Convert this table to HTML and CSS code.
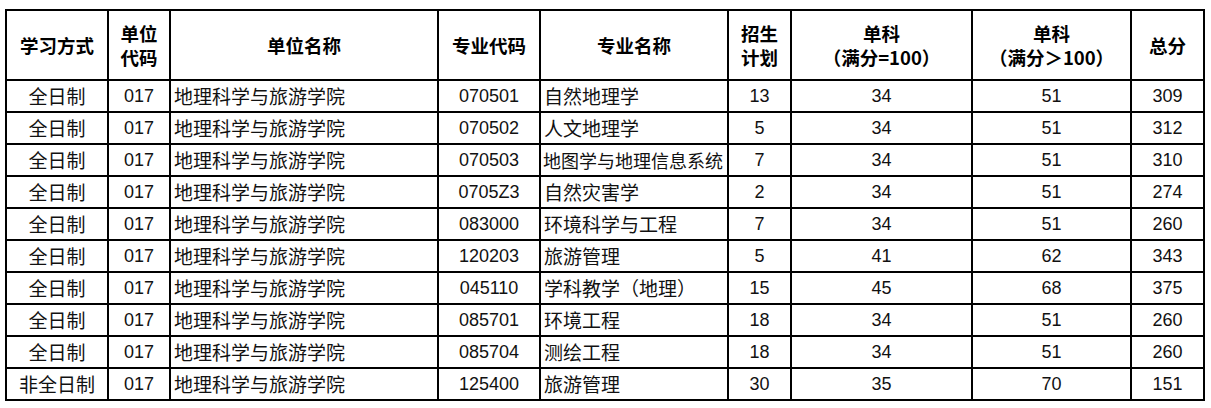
FILE: index.html
```html
<!DOCTYPE html>
<html lang="zh">
<head>
<meta charset="utf-8">
<link rel="stylesheet" href="styles.css">
</head>
<body>
<table class="grid">
  <colgroup>
    <col class="c1"><col class="c2"><col class="c3"><col class="c4"><col class="c5"><col class="c6"><col class="c7"><col class="c8"><col class="c9">
  </colgroup>
  <thead>
    <tr>
      <th>学习方式</th>
      <th>单位<br>代码</th>
      <th>单位名称</th>
      <th>专业代码</th>
      <th>专业名称</th>
      <th>招生<br>计划</th>
      <th>单科<br>（满分=100）</th>
      <th>单科<br>（满分＞100）</th>
      <th>总分</th>
    </tr>
  </thead>
  <tbody>
    <tr><td class="cn">全日制</td><td>017</td><td class="cn l">地理科学与旅游学院</td><td>070501</td><td class="cn l">自然地理学</td><td>13</td><td>34</td><td>51</td><td>309</td></tr>
    <tr><td class="cn">全日制</td><td>017</td><td class="cn l">地理科学与旅游学院</td><td>070502</td><td class="cn l">人文地理学</td><td>5</td><td>34</td><td>51</td><td>312</td></tr>
    <tr><td class="cn">全日制</td><td>017</td><td class="cn l">地理科学与旅游学院</td><td>070503</td><td class="cn l tight">地图学与地理信息系统</td><td>7</td><td>34</td><td>51</td><td>310</td></tr>
    <tr><td class="cn">全日制</td><td>017</td><td class="cn l">地理科学与旅游学院</td><td>0705Z3</td><td class="cn l">自然灾害学</td><td>2</td><td>34</td><td>51</td><td>274</td></tr>
    <tr><td class="cn">全日制</td><td>017</td><td class="cn l">地理科学与旅游学院</td><td>083000</td><td class="cn l">环境科学与工程</td><td>7</td><td>34</td><td>51</td><td>260</td></tr>
    <tr><td class="cn">全日制</td><td>017</td><td class="cn l">地理科学与旅游学院</td><td>120203</td><td class="cn l">旅游管理</td><td>5</td><td>41</td><td>62</td><td>343</td></tr>
    <tr><td class="cn">全日制</td><td>017</td><td class="cn l">地理科学与旅游学院</td><td>045110</td><td class="cn l">学科教学（地理）</td><td>15</td><td>45</td><td>68</td><td>375</td></tr>
    <tr><td class="cn">全日制</td><td>017</td><td class="cn l">地理科学与旅游学院</td><td>085701</td><td class="cn l">环境工程</td><td>18</td><td>34</td><td>51</td><td>260</td></tr>
    <tr><td class="cn">全日制</td><td>017</td><td class="cn l">地理科学与旅游学院</td><td>085704</td><td class="cn l">测绘工程</td><td>18</td><td>34</td><td>51</td><td>260</td></tr>
    <tr><td class="cn">非全日制</td><td>017</td><td class="cn l">地理科学与旅游学院</td><td>125400</td><td class="cn l">旅游管理</td><td>30</td><td>35</td><td>70</td><td>151</td></tr>
  </tbody>
</table>
</body>
</html>
```

FILE: styles.css
```css
html, body {
  margin: 0;
  padding: 0;
  background: #fff;
}

body {
  font-family: "Liberation Sans", "Noto Sans CJK SC", sans-serif;
  color: #111;
}

.grid {
  border-collapse: collapse;
  table-layout: fixed;
  width: 1198px;
  margin: 9px 0 0 5px;
}

.c1 { width: 102px; }
.c2 { width: 62px; }
.c3 { width: 268px; }
.c4 { width: 102px; }
.c5 { width: 188px; }
.c6 { width: 63px; }
.c7 { width: 181px; }
.c8 { width: 159px; }
.c9 { width: 73px; }

.grid th,
.grid td {
  border: 2px solid #000;
  padding: 0;
  text-align: center;
  vertical-align: middle;
  white-space: nowrap;
  overflow: hidden;
}

.grid th {
  height: 68px;
  font-family: "Noto Sans CJK SC", "Liberation Sans", sans-serif;
  font-weight: bold;
  font-size: 18.5px;
  line-height: 24px;
  color: #000;
}

.grid td {
  height: 30px;
  font-size: 18px;
  line-height: 30px;
}

.grid td.cn {
  font-family: "Noto Sans CJK SC", sans-serif;
  font-size: 19px;
}

.grid td.l {
  text-align: left;
  padding-left: 3px;
}

.grid td.tight {
  font-size: 18px;
  padding-left: 2px;
}
```
